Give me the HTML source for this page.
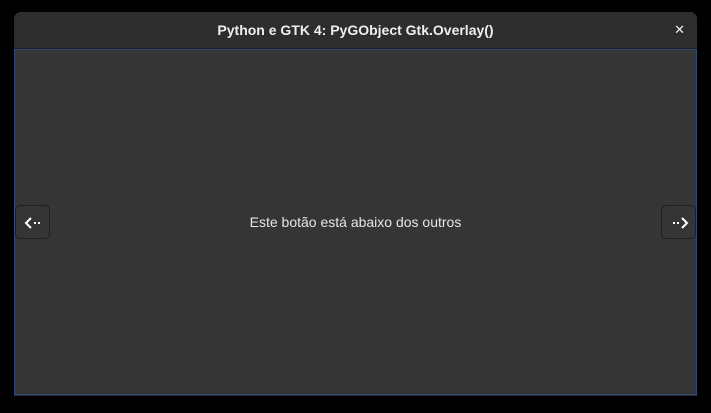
<!DOCTYPE html>
<html><head><meta charset="utf-8"><style>
html,body{margin:0;padding:0;background:#000;width:711px;height:413px;overflow:hidden;font-family:"Liberation Sans",sans-serif}
.win{position:absolute;left:14px;top:12px;width:683px;height:384px;background:#2b2b2b;border-radius:7px 7px 0 0;overflow:hidden}
.hb{position:absolute;left:0;top:0;width:683px;height:36px;background:#2d2d2d;border-bottom:1px solid #1e1e1e;color:#eee;font-weight:bold;font-size:14px;line-height:36px;text-align:center}
.x{position:absolute;right:12px;top:0;font-size:13px;color:#eee;font-weight:normal}
.c{position:absolute;left:0;top:37px;width:681px;height:344px;background:#353535;border:1px solid #2e4a78;}
.t{position:absolute;left:0;right:0;top:164px;text-align:center;color:#e6e6e6;font-size:14px}
.b{position:absolute;top:155px;width:35px;height:34px;background:#353535;border:1px solid #1f1f1f;border-radius:5px;box-sizing:border-box}
</style></head><body>
<div class="win">
<div class="hb">Python e GTK 4: PyGObject Gtk.Overlay()<span class="x">✕</span></div>
<div class="c">
<div class="t">Este botão está abaixo dos outros</div>
<div class="b" style="left:0"><svg width="35" height="34"><path d="M15 12 L10 17 L15 22" stroke="#fff" stroke-width="2" fill="none"/><rect x="18" y="16" width="2" height="2" fill="#fff"/><rect x="22" y="16" width="2" height="2" fill="#fff"/></svg></div>
<div class="b" style="right:0"><svg width="35" height="34"><path d="M20 12 L25 17 L20 22" stroke="#fff" stroke-width="2" fill="none"/><rect x="15" y="16" width="2" height="2" fill="#fff"/><rect x="11" y="16" width="2" height="2" fill="#fff"/></svg></div>
</div>
</div>
</body></html>
